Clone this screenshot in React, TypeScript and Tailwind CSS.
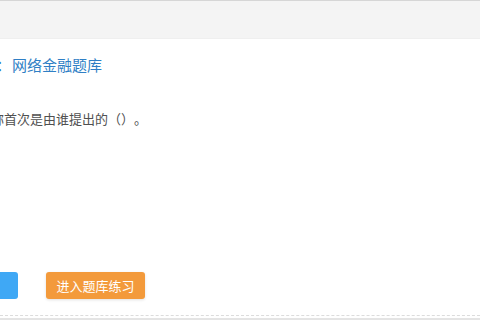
import React from "react";

export default function App() {
  return (
    <div
      className="w-[480px] h-[320px] overflow-hidden bg-white flex flex-col [text-spacing-trim:space-all]"
      style={{ fontFamily: '"Noto Sans CJK SC", "Microsoft YaHei", sans-serif' }}
    >
      <div className="h-px bg-[#d6d6d6]" />
      <div className="h-[38px] bg-[#f4f4f4] border-b border-[#efefef]" />
      <div className="h-[12px]" />
      <div className="h-[28px] flex items-center whitespace-nowrap text-[15px] text-[#2f7fc5]">
        <span className="-ml-[4px]">：</span>
        <span className="ml-[1px]">网络金融题库</span>
      </div>
      <div className="h-[28px]" />
      <div className="h-[24px] flex items-center whitespace-nowrap text-[13px] text-[#505050]">
        <span className="-ml-[9px]">称首次是由谁提出的（）。</span>
      </div>
      <div className="flex-1" />
      <div className="flex items-center whitespace-nowrap">
        <button className="-ml-[82px] w-[100px] h-[27px] rounded-[3px] bg-[#3fa8f5] text-white text-[13px]">
          查看答案
        </button>
        <button className="ml-[28px] h-[27px] px-[10px] w-[99px] rounded-[3px] bg-[#f39a3b] text-white text-[13px] shadow-[0_1px_3px_rgba(0,0,0,0.12)]">
          进入题库练习
        </button>
      </div>
      <div className="h-[16px]" />
      <div className="border-t border-dashed border-[#dcdcdc]" />
      <div className="h-[2px]" />
      <div className="h-[2px] bg-[#e4e4e4]" />
    </div>
  );
}
